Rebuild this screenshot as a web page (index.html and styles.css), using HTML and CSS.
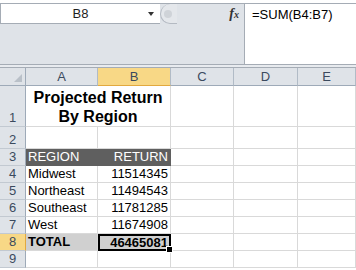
FILE: index.html
```html
<!DOCTYPE html>
<html lang="en">
<head>
    <meta charset="UTF-8">
    <title>Projected Return</title>
    <link rel="stylesheet" href="styles.css">
</head>
<body>
    <div class="formulabar">
        <div class="namebox">
            <span class="cellref">B8</span>
            <span class="dropdown"></span>
        </div>
        <div class="splitter"><span class="knob"></span></div>
        <div class="fxarea"><span class="fx">f<sub>x</sub></span></div>
        <div class="formula">=SUM(B4:B7)</div>
    </div>
    <div class="divider"></div>

    <div class="sheet">
        <div class="corner"><span class="tri"></span></div>
        <div class="colhead">A</div>
        <div class="colhead sel">B</div>
        <div class="colhead">C</div>
        <div class="colhead">D</div>
        <div class="colhead">E</div>

        <div class="rowhead">1</div>
        <div class="cell title">Projected Return<br>By Region</div>
        <div class="cell"></div><div class="cell"></div><div class="cell"></div>

        <div class="rowhead">2</div>
        <div class="cell"></div><div class="cell"></div><div class="cell"></div><div class="cell"></div><div class="cell"></div>

        <div class="rowhead">3</div>
        <div class="cell dark">REGION</div>
        <div class="cell dark num">RETURN</div>
        <div class="cell"></div><div class="cell"></div><div class="cell"></div>

        <div class="rowhead">4</div>
        <div class="cell">Midwest</div>
        <div class="cell num">11514345</div>
        <div class="cell"></div><div class="cell"></div><div class="cell"></div>

        <div class="rowhead">5</div>
        <div class="cell">Northeast</div>
        <div class="cell num">11494543</div>
        <div class="cell"></div><div class="cell"></div><div class="cell"></div>

        <div class="rowhead">6</div>
        <div class="cell">Southeast</div>
        <div class="cell num">11781285</div>
        <div class="cell"></div><div class="cell"></div><div class="cell"></div>

        <div class="rowhead">7</div>
        <div class="cell">West</div>
        <div class="cell num">11674908</div>
        <div class="cell"></div><div class="cell"></div><div class="cell"></div>

        <div class="rowhead sel">8</div>
        <div class="cell total">TOTAL</div>
        <div class="cell total num active">46465081<span class="handle"></span></div>
        <div class="cell"></div><div class="cell"></div><div class="cell"></div>

        <div class="rowhead">9</div>
        <div class="cell"></div><div class="cell"></div><div class="cell"></div><div class="cell"></div><div class="cell"></div>
    </div>
</body>
</html>
```

FILE: styles.css
```css
body {
    margin: 0;
    width: 356px;
    height: 270px;
    overflow: hidden;
    font-family: "Liberation Sans", Arial, sans-serif;
    background-color: #ffffff;
}
.formulabar {
    display: flex;
    height: 60px;
    margin-top: 3px;
    border-top: 1px solid #a5acb5;
    background-color: #dfe3e8;
}
.namebox {
    position: relative;
    width: 159px;
    height: 19px;
    background-color: #ffffff;
    border-left: 1px solid #a5acb5;
    border-bottom: 1px solid #a5acb5;
    text-align: center;
}
.cellref {
    font-size: 13px;
    line-height: 19px;
    color: #1e1e1e;
}
.dropdown {
    position: absolute;
    left: 147px;
    top: 8px;
    border-left: 3px solid transparent;
    border-right: 3px solid transparent;
    border-top: 4px solid #333333;
}
.splitter {
    width: 17px;
    height: 20px;
    border-radius: 10px 0 0 10px;
    border: 1px solid #b4bac2;
    border-right: none;
    border-top: none;
    box-sizing: border-box;
    background-color: #e4e7eb;
    display: flex;
    align-items: center;
    padding-left: 3px;
}
.knob {
    width: 8px;
    height: 8px;
    border-radius: 50%;
    background-color: #cfd3d8;
}
.fxarea {
    width: 67px;
    text-align: right;
    padding-right: 5px;
    box-sizing: border-box;
}
.fx {
    font-family: "Liberation Serif", serif;
    font-style: italic;
    font-weight: bold;
    font-size: 14px;
    line-height: 20px;
    color: #333333;
}
.fx sub {
    font-size: 10px;
    vertical-align: 0;
}
.formula {
    flex: 1;
    background-color: #ffffff;
    border-left: 1px solid #a5acb5;
    padding-left: 7px;
    font-size: 13px;
    line-height: 22px;
    color: #000000;
}
.divider {
    height: 2px;
    border-top: 1px solid #a5acb5;
    border-bottom: 1px solid #a5acb5;
    background-color: #e8ebef;
}
.sheet {
    display: grid;
    grid-template-columns: 26px 72px 73px 63px 64px 58px;
    grid-template-rows: 18px 41px 22px 17px 17px 17px 17px 17px 17px 17px;
}
.corner, .colhead, .rowhead {
    background-color: #dfe3e8;
    border-right: 1px solid #9eaab8;
    border-bottom: 1px solid #9eaab8;
    box-sizing: border-box;
    color: #3b4a5e;
    font-size: 13px;
    text-align: center;
}
.corner {
    position: relative;
}
.tri {
    position: absolute;
    right: 3px;
    bottom: 3px;
    border-left: 8px solid transparent;
    border-bottom: 8px solid #b9c0c8;
}
.colhead {
    line-height: 17px;
    border-right-color: #b1bbc6;
}
.colhead.sel {
    background-color: #f8d886;
    border-bottom-color: #e2a93f;
}
.rowhead {
    display: flex;
    align-items: flex-end;
    justify-content: center;
    line-height: 16px;
    border-bottom-color: #c2c9d1;
}
.rowhead.sel {
    background-color: #f8d886;
    border-right-color: #e2a93f;
}
.cell {
    border-right: 1px solid #d9d9d9;
    border-bottom: 1px solid #d9d9d9;
    box-sizing: border-box;
    font-size: 13px;
    line-height: 16px;
    padding: 0 2px;
    color: #000000;
    white-space: nowrap;
}
.cell.num {
    text-align: right;
}
.cell.title {
    grid-column: span 2;
    font-size: 16px;
    font-weight: bold;
    text-align: center;
    line-height: 19px;
    padding-top: 2px;
}
.cell.dark {
    background-color: #5f5f5f;
    color: #ffffff;
    border-color: #5f5f5f;
}
.cell.total {
    background-color: #d0d0d0;
    font-weight: bold;
}
.cell.active {
    position: relative;
    border: 2px solid #000000;
    line-height: 13px;
    padding-right: 1px;
}
.handle {
    position: absolute;
    right: -4px;
    bottom: -4px;
    width: 5px;
    height: 5px;
    background-color: #000000;
    border: 1px solid #ffffff;
}
```
